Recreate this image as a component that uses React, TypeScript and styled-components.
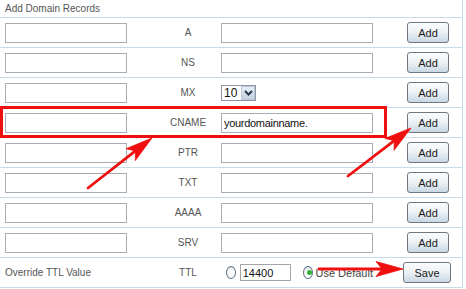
import React from "react";
import styled, { createGlobalStyle } from "styled-components";

const LINE = "#c6dce8";

const GlobalStyle = createGlobalStyle`
  body {
    margin: 0;
    background: #ffffff;
    font-family: "Liberation Sans", Arial, sans-serif;
  }
`;

const Page = styled.div`
  position: relative;
  width: 462px;
  border-right: 1px solid ${LINE};
  color: #555;
  font-size: 10px;
`;

const Header = styled.div`
  height: 18px;
  padding: 2px 0 0 5px;
  box-sizing: border-box;
  border-bottom: 1px solid ${LINE};
  line-height: 14px;
`;

const Row = styled.div`
  display: grid;
  grid-template-columns: 122px 94px 152px 1fr;
  align-items: center;
  height: 29px;
  padding-left: 5px;
  border-bottom: 1px solid ${LINE};
`;

const TextField = styled.input`
  display: block;
  width: 100%;
  height: 20px;
  box-sizing: border-box;
  margin: 0;
  padding: 0 2px;
  border: 1px solid #a9acb0;
  font-family: "Liberation Sans", Arial, sans-serif;
  font-size: 11px;
  letter-spacing: -0.3px;
  color: #111;
  outline: none;
`;

const TypeLabel = styled.div`
  padding-left: 28px;
  text-align: center;
`;

const RowLabel = styled.div`
  white-space: nowrap;
`;

const ActionCell = styled.div<{ $inset: number }>`
  padding-left: ${(p) => p.$inset}px;
`;

const Button = styled.button<{ $w: number }>`
  display: block;
  width: ${(p) => p.$w}px;
  height: 21px;
  margin: 0;
  padding: 0;
  border: 1px solid #6f7880;
  border-radius: 3px;
  background: linear-gradient(#fbfcfd 0%, #eef3f7 45%, #c9d8e4 100%);
  font-family: "Liberation Sans", Arial, sans-serif;
  font-size: 11px;
  color: #1a1a1a;
`;

const Select = styled.div`
  display: inline-flex;
  align-items: center;
  height: 16px;
  width: 35px;
  box-sizing: border-box;
  border: 1px solid #8a96a3;
  background: #fff;
`;

const SelectValue = styled.span`
  flex: 1;
  padding-left: 2px;
  font-size: 12px;
  color: #111;
  line-height: 14px;
`;

const SelectArrow = styled.span`
  display: flex;
  align-items: center;
  justify-content: center;
  width: 14px;
  height: 14px;
  box-sizing: border-box;
  border: 1px solid #b9c7d8;
  background: linear-gradient(#e6edf6, #c4d1e2);
`;

const TtlControls = styled.div`
  display: flex;
  align-items: center;
  padding-left: 5px;
  white-space: nowrap;
  color: #444;
  font-size: 11px;
`;

const Radio = styled.span<{ $checked?: boolean }>`
  position: relative;
  display: inline-block;
  width: 13px;
  height: 13px;
  box-sizing: border-box;
  border-radius: 50%;
  border: 1px solid #5f7388;
  background: radial-gradient(circle at 60% 60%, #ffffff 30%, #d6dde4 100%);
  &::after {
    content: "";
    display: ${(p) => (p.$checked ? "block" : "none")};
    position: absolute;
    left: 3px;
    top: 3px;
    width: 5px;
    height: 5px;
    border-radius: 50%;
    background: #2fb12f;
  }
`;

const TtlField = styled(TextField)`
  width: 51px;
  height: 17px;
  margin-left: 4px;
  font-size: 11px;
  letter-spacing: 0;
  border-color: #a1a6ab;
`;

const DefaultRadio = styled(Radio)`
  margin-left: 12px;
`;

const DefaultText = styled.span`
  margin-left: 3px;
`;

const Annotations = styled.svg`
  position: absolute;
  left: 0;
  top: 0;
  pointer-events: none;
`;

const records = ["A", "NS", "MX", "CNAME", "PTR", "TXT", "AAAA", "SRV"];

type Pt = [number, number];

const arrows: [Pt, Pt][] = [
  [[88, 188], [152, 138]],
  [[348, 176], [411, 128]],
  [[319, 269], [403, 269]],
];

function Arrow({ from, to }: { from: Pt; to: Pt }) {
  const dx = to[0] - from[0];
  const dy = to[1] - from[1];
  const len = Math.hypot(dx, dy);
  const ux = dx / len;
  const uy = dy / len;
  const px = -uy;
  const py = ux;
  const back: Pt = [to[0] - 27 * ux, to[1] - 27 * uy];
  const notch: Pt = [to[0] - 21 * ux, to[1] - 21 * uy];
  const w1: Pt = [back[0] + 7.5 * px, back[1] + 7.5 * py];
  const w2: Pt = [back[0] - 7.5 * px, back[1] - 7.5 * py];
  const pts = [to, w1, notch, w2].map((p) => p.join(",")).join(" ");
  return (
    <g fill="#f00f0f" stroke="#f00f0f">
      <line x1={from[0]} y1={from[1]} x2={notch[0]} y2={notch[1]} strokeWidth={2.8} strokeLinecap="round" />
      <polygon points={pts} strokeWidth={0.8} strokeLinejoin="round" />
    </g>
  );
}

function Chevron() {
  return (
    <svg width="9" height="6" viewBox="0 0 9 6">
      <path d="M1 1 L4.5 4.5 L8 1" fill="none" stroke="#27364d" strokeWidth="2" />
    </svg>
  );
}

export default function App() {
  return (
    <>
      <GlobalStyle />
      <Page>
        <Header>Add Domain Records</Header>
        {records.map((type) => (
          <Row key={type}>
            <TextField />
            <TypeLabel>{type}</TypeLabel>
            <div>
              {type === "MX" ? (
                <Select>
                  <SelectValue>10</SelectValue>
                  <SelectArrow>
                    <Chevron />
                  </SelectArrow>
                </Select>
              ) : (
                <TextField defaultValue={type === "CNAME" ? "yourdomainname." : ""} />
              )}
            </div>
            <ActionCell $inset={34}>
              <Button $w={42}>Add</Button>
            </ActionCell>
          </Row>
        ))}
        <Row>
          <RowLabel>Override TTL Value</RowLabel>
          <TypeLabel>TTL</TypeLabel>
          <TtlControls>
            <Radio />
            <TtlField defaultValue="14400" />
            <DefaultRadio $checked />
            <DefaultText>Use Default</DefaultText>
          </TtlControls>
          <ActionCell $inset={30}>
            <Button $w={48}>Save</Button>
          </ActionCell>
        </Row>
        <Annotations width={466} height={289} viewBox="0 0 466 289">
          <rect x={1.5} y={107.5} width={384} height={29} fill="none" stroke="#f00f0f" strokeWidth={3} />
          {arrows.map(([from, to], i) => (
            <Arrow key={i} from={from} to={to} />
          ))}
        </Annotations>
      </Page>
    </>
  );
}
